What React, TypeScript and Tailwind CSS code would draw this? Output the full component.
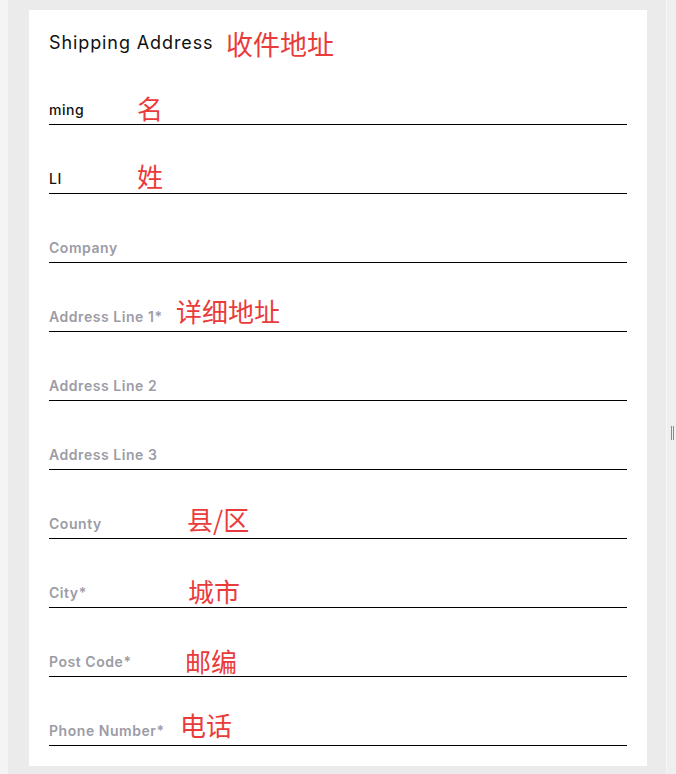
const fields: { label: string; filled?: boolean; note?: string; noteLeft?: string; noteBottom?: string }[] = [
  { label: "ming", filled: true, note: "名", noteLeft: "left-[88px]", noteBottom: "bottom-[3px]" },
  { label: "LI", filled: true, note: "姓", noteLeft: "left-[88px]", noteBottom: "bottom-[4px]" },
  { label: "Company" },
  { label: "Address Line 1*", note: "详细地址", noteLeft: "left-[127px]", noteBottom: "bottom-[7px]" },
  { label: "Address Line 2" },
  { label: "Address Line 3" },
  { label: "County", note: "县/区", noteLeft: "left-[138px]", noteBottom: "bottom-[6px]" },
  { label: "City*", note: "城市", noteLeft: "left-[139px]", noteBottom: "bottom-[3px]" },
  { label: "Post Code*", note: "邮编", noteLeft: "left-[136px]", noteBottom: "bottom-[2px]" },
  { label: "Phone Number*", note: "电话", noteLeft: "left-[131px]", noteBottom: "bottom-[7px]" },
];

const noteFont = "font-['Noto_Sans_CJK_SC',sans-serif]";

export default function App() {
  return (
    <div className="flex h-[774px] w-[676px] overflow-hidden bg-[#ebebeb] font-['Inter',sans-serif]">
      <div className="w-[8px] shrink-0 bg-[#f4f4f4]" />
      <div className="flex-1 pl-[21px] pt-[10px]">
        <div className="w-[618px] bg-white px-[20px] pb-[20px] pt-[20px]">
          {/* Header */}
          <div className="relative h-[26px]">
            <span className="text-[18px] leading-[26px] text-[#111111] tracking-[0.9px]">Shipping Address</span>
            <span className={`absolute left-[177px] top-[0px] text-[27px] leading-none text-[#ea3b3b] ${noteFont}`}>
              收件地址
            </span>
          </div>

          {fields.map((f) => (
            <div key={f.label} className="relative flex h-[69px] items-end border-b border-black pb-[4px]">
              <span
                className={`text-[14px] leading-[20px] tracking-[0.55px] ${
                  f.filled ? "font-medium text-[#111111]" : "font-semibold text-[#9c9ca6]"
                }`}
              >
                {f.label}
              </span>
              {f.note && (
                <span className={`absolute ${f.noteLeft} ${f.noteBottom} text-[26px] leading-none text-[#ea3b3b] ${noteFont}`}>
                  {f.note}
                </span>
              )}
            </div>
          ))}
        </div>
      </div>
      {/* Right resize strip */}
      <div className="relative w-[10px] shrink-0 border-l border-[#f6f6f6] bg-[#efefef]">
        <div className="absolute left-[4px] top-[426px] flex h-[14px] gap-[1px]">
          <div className="w-[1px] bg-[#8a8a8a]" />
          <div className="w-[1px] bg-[#8a8a8a]" />
        </div>
      </div>
    </div>
  );
}
